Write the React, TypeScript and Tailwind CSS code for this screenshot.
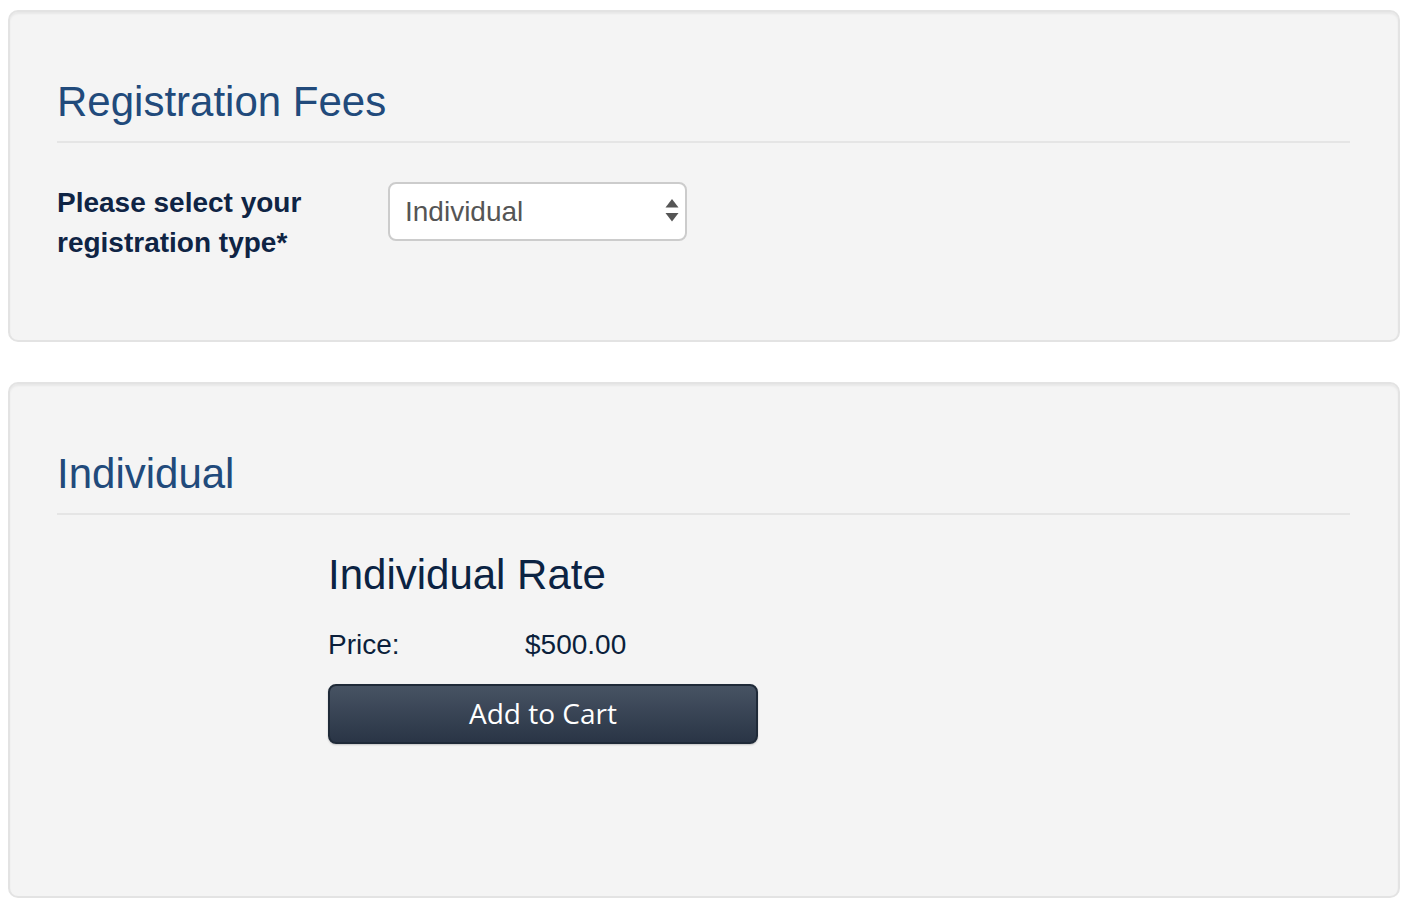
import { useState } from 'react';

const options = ['Individual', 'Group', 'Student'];

function Well({ children, className = '' }: { children: React.ReactNode; className?: string }) {
  return (
    <div
      className={`rounded-[10px] border-2 border-[#e3e3e3] bg-[#f4f4f4] pt-[66px] pr-[48px] pl-[47px] shadow-[inset_0_2px_2px_rgba(0,0,0,0.05)] ${className}`}>
      {children}
    </div>
  );
}

function SectionTitle({ title }: { title: string }) {
  return (
    <h2 className="border-b-2 border-[#e5e5e5] pb-[15px] text-[42px] leading-[48px] font-normal text-[#214a7b]">
      {title}
    </h2>
  );
}

export default function App() {
  const [type, setType] = useState('Individual');

  return (
    <div
      className="min-h-screen bg-white pt-[10px] pr-[8px] pl-2"
      style={{ fontFamily: '"Liberation Sans", Arial, Helvetica, sans-serif' }}>
      <Well className="h-[332px]">
        <SectionTitle title="Registration Fees" />

        <div className="mt-[40px] flex items-start">
          <label
            htmlFor="reg-type"
            className="w-[331px] text-[28px] leading-[40px] font-bold text-[#0f2444]">
            Please select your
            <br />
            registration type*
          </label>
          <div className="relative -mt-px">
            <select
              id="reg-type"
              value={type}
              onChange={(e) => setType(e.target.value)}
              className="block h-[59px] w-[299px] appearance-none rounded-[8px] border-2 border-[#cccccc] bg-white pl-[15px] text-[28px] text-[#555555] outline-none">
              {options.map((o) => (
                <option key={o}>{o}</option>
              ))}
            </select>
            <svg
              aria-hidden="true"
              className="pointer-events-none absolute top-[17px] right-[8px] h-[24px] w-[14px]"
              viewBox="0 0 14 24"
              fill="#555555">
              <path d="M7 0 L13.5 8.5 H0.5 Z" />
              <path d="M0.5 14 H13.5 L7 22.5 Z" />
            </svg>
          </div>
        </div>
      </Well>

      <Well className="mt-[40px] h-[516px]">
        <SectionTitle title="Individual" />

        <div className="mt-[36px] pl-[271px]">
          <h3 className="text-[42px] leading-[48px] font-normal text-[#0b2343]">
            Individual Rate
          </h3>
          <div className="mt-[26px] flex text-[28px] leading-[40px] text-[#0b1f3b]">
            <span className="w-[197px]">Price:</span>
            <span>$500.00</span>
          </div>
          <button
            type="button"
            className="mt-[19px] h-[60px] w-[430px] rounded-[8px] border-2 border-[#1f2a38] bg-gradient-to-b from-[#475363] to-[#2a3546] pb-[3px] text-[28px] text-white shadow-[0_1px_2px_rgba(0,0,0,0.2)]"
            style={{ fontFamily: '"Open Sans", sans-serif' }}>
            Add to Cart
          </button>
        </div>
      </Well>
    </div>
  );
}
